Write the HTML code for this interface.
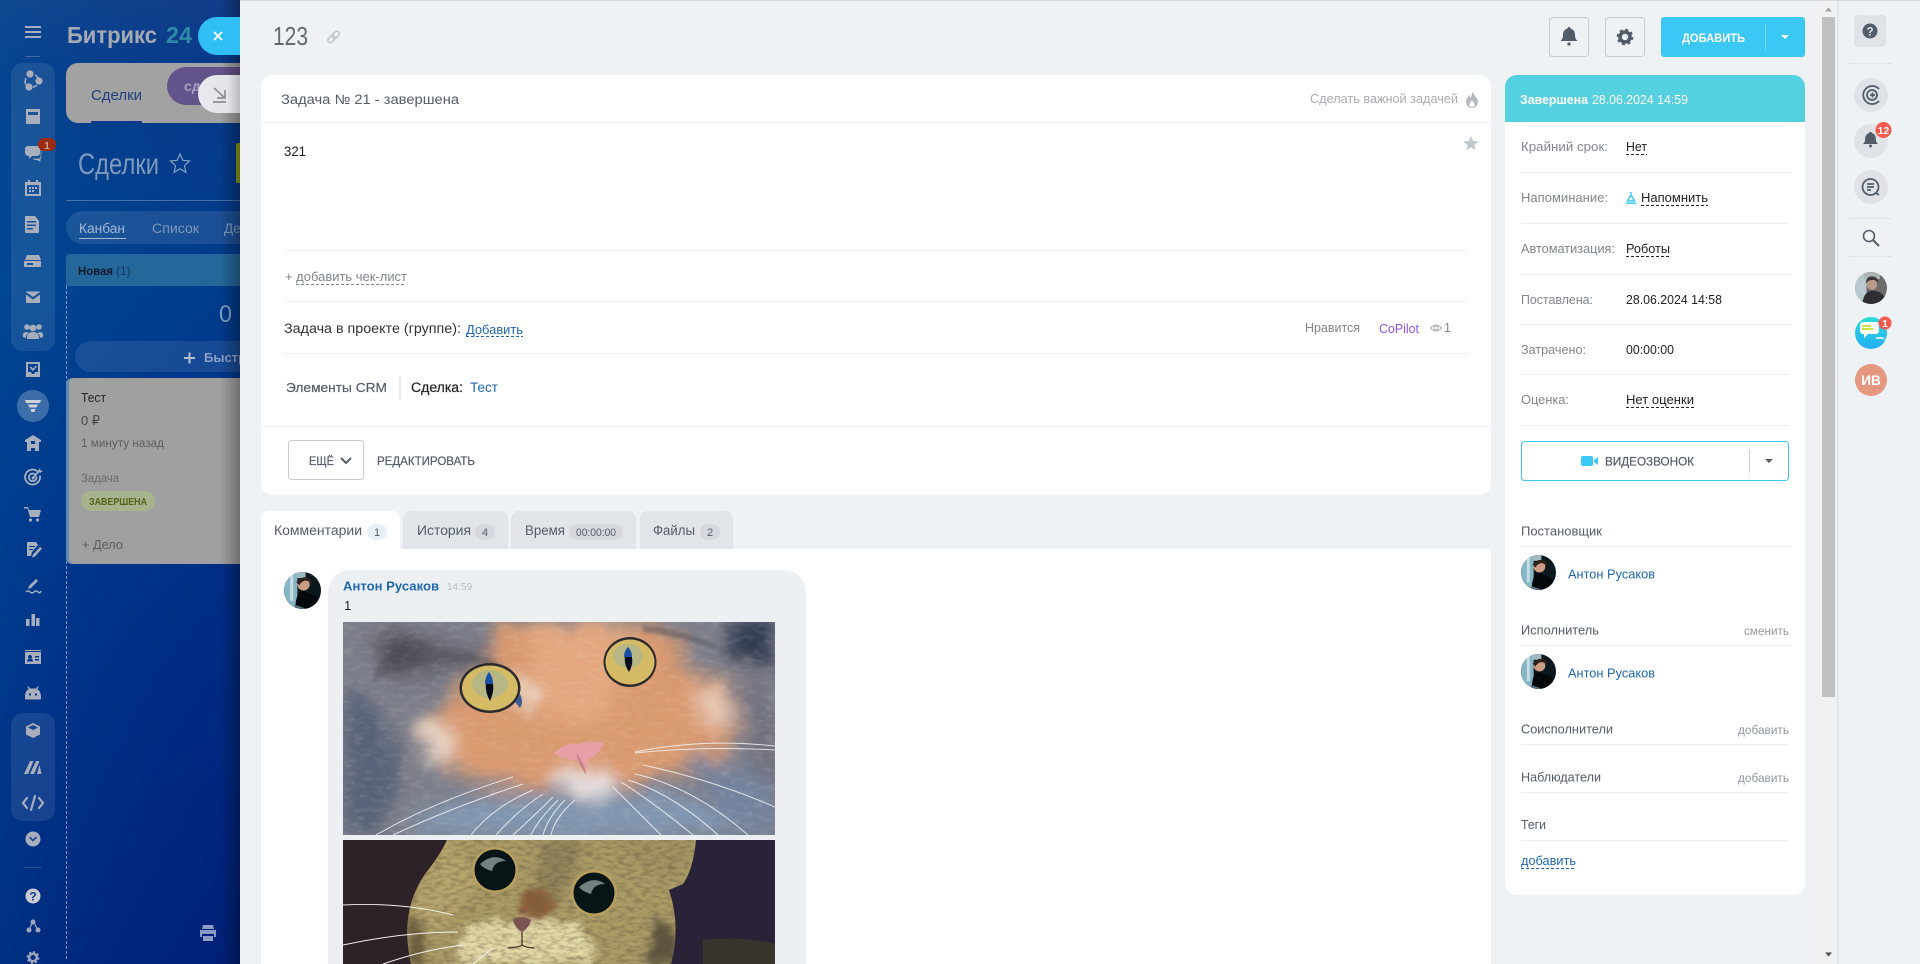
<!DOCTYPE html>
<html lang="ru"><head><meta charset="utf-8"><title>Задача 123</title>
<style>
html,body{margin:0;padding:0;width:1920px;height:964px;overflow:hidden;background:#eef2f4}
svg{display:block;position:absolute;left:0;top:0}
text{font-family:"Liberation Sans","DejaVu Sans",sans-serif;white-space:pre}
.d{stroke-dasharray:3 2;stroke-width:1;fill:none}
</style></head><body>
<svg width="1920" height="964" viewBox="0 0 1920 964" xmlns="http://www.w3.org/2000/svg">
<defs>
<linearGradient id="bg" x1="0" y1="0" x2="0" y2="1">
<stop offset="0" stop-color="#17448d"/><stop offset=".08" stop-color="#083f8b"/><stop offset=".3" stop-color="#00438f"/><stop offset=".55" stop-color="#00328a"/><stop offset=".8" stop-color="#00277e"/><stop offset="1" stop-color="#001e74"/>
</linearGradient>
<linearGradient id="bg2" x1="0" y1="0" x2="1" y2="0"><stop offset="0" stop-color="#005099" stop-opacity=".45"/><stop offset="1" stop-color="#00237e" stop-opacity=".3"/></linearGradient>
<linearGradient id="shade" x1="0" y1="0" x2="1" y2="0"><stop offset="0" stop-color="#000" stop-opacity="0"/><stop offset="1" stop-color="#000" stop-opacity=".3"/></linearGradient>
<linearGradient id="chatg" x1="0" y1="0" x2="0" y2="1"><stop offset="0" stop-color="#2fdcd5"/><stop offset="1" stop-color="#20aef5"/></linearGradient>
<linearGradient id="ming" x1="0" y1="0" x2="1" y2="0"><stop offset="0" stop-color="#e8eaee"/><stop offset=".7" stop-color="#e2e4e8"/><stop offset="1" stop-color="#b9bbbf"/></linearGradient>
<filter id="fur" x="-20%" y="-20%" width="140%" height="140%"><feGaussianBlur stdDeviation="9" result="s"/><feTurbulence type="fractalNoise" baseFrequency=".03" numOctaves="2" seed="4" result="n"/><feDisplacementMap in="s" in2="n" scale="20" xChannelSelector="R" yChannelSelector="G"/></filter>
<filter id="fur2" x="-20%" y="-20%" width="140%" height="140%"><feGaussianBlur stdDeviation="4" result="s"/><feTurbulence type="fractalNoise" baseFrequency=".05 .09" numOctaves="2" seed="9" result="n"/><feDisplacementMap in="s" in2="n" scale="12" xChannelSelector="R" yChannelSelector="G"/></filter>
<filter id="noise" x="0" y="0" width="100%" height="100%"><feTurbulence type="fractalNoise" baseFrequency=".12 .3" numOctaves="3" seed="7"/><feColorMatrix values="0 0 0 0 .12  0 0 0 0 .09  0 0 0 0 .05  2.600 0 0 0 -1.050"/></filter>
<filter id="noise1" x="0" y="0" width="100%" height="100%"><feTurbulence type="fractalNoise" baseFrequency=".09 .22" numOctaves="3" seed="3"/><feColorMatrix values="0 0 0 0 1  0 0 0 0 .93  0 0 0 0 .85  2.200 0 0 0 -1.050"/></filter>
<filter id="b2" x="-30%" y="-30%" width="160%" height="160%"><feGaussianBlur stdDeviation="1.500"/></filter>
<clipPath id="c1"><rect x="0" y="0" width="432" height="213"/></clipPath>
<clipPath id="c2"><rect x="0" y="0" width="432" height="124"/></clipPath>
<clipPath id="head2"><path d="M68 124Q56 72 82 34 98 14 104 0H353Q350 30 340 44L326 50Q338 85 328 124z"/></clipPath>
<clipPath id="avc"><circle cx="18" cy="18" r="18"/></clipPath>
<symbol id="av" viewBox="0 0 36 36"><g clip-path="url(#avc)"><rect width="36" height="36" fill="#0a171d"/><rect width="13" height="36" fill="#86b6c6"/><rect x="6" width="3" height="28" fill="#c9dde4"/><rect x="12" width="9" height="6" fill="#9fbac2"/><circle cx="19" cy="12" r="6" fill="#cd9c84"/><path d="M12 10q6-8 14-3l1 4q-6-4-8-2-3 1-4 4z" fill="#2e221b"/><path d="M11 36q0-15 7-18 7 3 12 5 4 3 4 13z" fill="#04080b"/><path d="M10 32q5 1 12 4h-11z" fill="#58717c"/></g></symbol>
</defs>

<!-- LEFT BACKDROP -->
<rect width="240" height="964" fill="url(#bg)"/>
<rect width="240" height="964" fill="url(#bg2)" opacity=".8"/>
<g fill="#a9aebc">
<rect x="25" y="26" width="16" height="2"/><rect x="25" y="31" width="16" height="2"/><rect x="25" y="36" width="16" height="2"/>
</g>
<rect x="25" y="56" width="15" height="1" fill="#fff" opacity=".2"/>
<rect x="11" y="63" width="44" height="288" rx="12" fill="#fff" opacity=".085"/>
<rect x="11" y="713" width="44" height="108" rx="12" fill="#fff" opacity=".085"/>
<circle cx="33" cy="406" r="16" fill="#fff" opacity=".24"/>
<g fill="#a9aebc">
<g transform="translate(33 81)"><circle cx="-3" cy="-7" r="3.600"/><circle cx="6" cy="0" r="3.600"/><circle cx="-4" cy="6" r="3.600"/><path d="M-7-3a8 8 0 0 0 0 7" fill="none" stroke="#a9aebc" stroke-width="1.500"/><path d="M2-6a7 7 0 0 1 3 3M4 4a7 7 0 0 1-4 2" fill="none" stroke="#a9aebc" stroke-width="1.500"/></g>
<path d="M26 109h14v15H26zM28 112v3h10v-3z" fill-rule="evenodd"/>
<path d="M28 146h9a3 3 0 0 1 3 3v4a3 3 0 0 1-3 3h-5l-3 3v-3a4 4 0 0 1-4-3v-4a3 3 0 0 1 3-3z"/><path d="M41 149v8a2 2 0 0 1-2 2h-6l5 1 2 1v-2a2 2 0 0 0 1-2z" stroke="#a9aebc" stroke-width=".7"/>
<path d="M25 182h3v-2h2v2h6v-2h2v2h3v14H25zM27 185v9h12v-9zM29 187h2v2h-2zM32 187h2v2h-2zM35 187h2v2h-2zM29 190h2v2h-2zM32 190h2v2h-2z" fill-rule="evenodd"/>
<path d="M25 216h10l4 5v11a1 1 0 0 1-1 1H26a1 1 0 0 1-1-1zM27 221v1.500h9V221zM27 224.500V226h9v-1.500zM27 228v1.500h6V228z" fill-rule="evenodd"/>
<path d="M27 255h12l2 5H25zM24 261h17v6H24zM27 263v2h6v-2z" fill-rule="evenodd"/>
<path d="M26 292l7 5 7-5v-.5H26zM26 294.500V303h14v-8.500l-7 5z"/>
<g transform="translate(33 332)"><circle cx="-6" cy="-5" r="2.800"/><circle cx="6" cy="-5" r="2.800"/><circle cy="-4" r="3.400"/><path d="M-10 5q-1-5 3-5l3 1q-3 1-3 5zM10 5q1-5-3-5l-3 1q3 1 3 5zM-6 6q0-6 6-6t6 6v1H-6z"/></g>
<path d="M26 362h14v15H26zM28 364v8h3l1 2h2l1-2h3v-8zM29.500 367.500l1.500-1 2 2 3-3 1 1-4 4.500z" fill-rule="evenodd"/>
<path d="M25 400h16l-1 3H26zM28 404.500h10l-1.500 3h-7zM30.500 409h5l-1 3h-3z" fill="#cfd2d9"/>
<path d="M33 435l8 5v2h-2v9h-4v-3h-4v3h-4v-9h-2v-2zM31 441v3h4v-3z" fill-rule="evenodd"/>
</g>
<g fill="none" stroke="#a9aebc" stroke-width="1.800" stroke-linecap="round">
<path d="M37 471a7.500 7.500 0 1 0 3 5"/><path d="M34.500 474a3.800 3.800 0 1 0 2 3"/><path d="M33 478l6-7"/>
<path d="M27 798l-4 5 4 5M39 798l4 5-4 5M31 810l4-14" stroke-width="2.200"/>
</g>
<g fill="#a9aebc">
<path d="M38 471l2-3 .5 2.500 2.500.5-3 2z"/><circle cx="33" cy="478" r="1.500"/>
<path d="M24 507h4l1 3h12l-2 7H30l-2.500-8.500H24z"/><circle cx="30.500" cy="520" r="1.600"/><circle cx="37.500" cy="520" r="1.600"/>
<path d="M27 542h9l2 3-6 7-1 4h-4zM29 546v1h6v-1zM29 549v1h4v-1z" fill-rule="evenodd"/><path d="M40 547l2 1.500-7 8-3 1 1-3z"/>
<path d="M36 579l2 2-7 7-3 1 1-3z"/>
<path d="M26 592q2-2 4 0t4 0 4 0 3-1" fill="none" stroke="#a9aebc" stroke-width="1.500"/>
<rect x="26" y="619" width="3.500" height="7"/><rect x="31.500" y="614" width="3.500" height="12"/><rect x="36" y="618" width="3.500" height="8"/>
<path d="M25 650h16v1H25zM25 652h16v12H25zM30 655a2 2 0 1 0 .01 0zM27 661.500h6q0-3-3-3t-3 3zM35 656v1.500h4V656zM35 659v1.500h4V659z" fill-rule="evenodd"/>
<path d="M28 686l2 2.500h6L38 686l.8.6-1.500 2.600Q41 691 41 697v1.500a1 1 0 0 1-1 1H26a1 1 0 0 1-1-1V697q0-6 3.700-7.800l-1.500-2.600zM29 693.500h2v2h-2zM35 693.500h2v2h-2z" fill-rule="evenodd"/>
<path d="M33 723l7 3.500v8L33 738l-7-3.500v-8zM28 727.500l5 2.500 5-2.500-5-2.500z" fill-rule="evenodd"/>
<path d="M24 774l6-13h3.500L28 774zM30 774l6-13h3.500L34 774zM37 774l2.500-9 2 9z"/>
<circle cx="33" cy="839" r="7.500"/>
</g>
<path d="M29.500 837l3.500 3.500 3.500-3.500" fill="none" stroke="#244a8f" stroke-width="1.800"/>
<rect x="23" y="867" width="19" height="1" fill="#fff" opacity=".15"/>
<circle cx="33" cy="896" r="7.500" fill="#c9ccd4"/><text x="33" y="900.500" text-anchor="middle" font-size="12" font-weight="bold" fill="#0f3a85">?</text>
<g fill="#9ea6bc"><circle cx="33" cy="922" r="2.500"/><circle cx="29" cy="930" r="2.500"/><circle cx="38" cy="930" r="2.500"/><path d="M32.500 922l-3.500 8M33.500 922l4.500 8" stroke="#9ea6bc" stroke-width="1.200"/>
<circle cx="33" cy="957.500" r="3.800" fill="none" stroke="#9ea6bc" stroke-width="2.500"/><circle cx="33" cy="957.500" r="5.500" fill="none" stroke="#9ea6bc" stroke-width="1.800" stroke-dasharray="2.200 2.100"/></g>
<rect x="38" y="138" width="18" height="13" rx="6.500" fill="#9c2c10"/><text x="47" y="149" text-anchor="middle" font-size="10" font-weight="bold" fill="#c9a89e">1</text>

<text x="67" y="43" font-size="23" font-weight="bold" fill="#a7aab3" textLength="90" lengthAdjust="spacingAndGlyphs">Битрикс</text>
<text x="166" y="43" font-size="23" font-weight="bold" fill="#2c8ba8" textLength="26" lengthAdjust="spacingAndGlyphs">24</text>

<path d="M240 63H78a12 12 0 0 0-12 12v36a12 12 0 0 0 12 12h162z" fill="#a2a2a2"/>
<text x="91" y="100" font-size="15" fill="#1f3f80" textLength="51" lengthAdjust="spacingAndGlyphs">Сделки</text>
<rect x="91" y="121" width="51" height="2" fill="#12368c"/>
<path d="M240 67h-54a19 19 0 0 0 0 38h54z" fill="#63538b"/>
<text x="184" y="91" font-size="14" fill="#a9a0c2" font-weight="bold">сд</text>

<text x="78" y="174" font-size="30" fill="#8aa2c1" textLength="81" lengthAdjust="spacingAndGlyphs" opacity=".92">Сделки</text>
<path d="M180 154l2.800 6.300 6.700.7-5 4.600 1.400 6.700-5.900-3.500-5.900 3.500 1.400-6.700-5-4.600 6.700-.7z" fill="none" stroke="#85a0c2" stroke-width="1.200"/>
<path d="M240 143h-2a2 2 0 0 0-2 2v36a2 2 0 0 0 2 2h2z" fill="#8a9b19"/>
<rect x="66" y="200" width="174" height="1" fill="#fff" opacity=".28"/>
<path d="M240 211H82.500a16.500 16.500 0 0 0 0 33H240z" fill="#fff" opacity=".1"/>
<text x="79" y="233" font-size="13.500" fill="#a5b9d0" textLength="46" lengthAdjust="spacingAndGlyphs">Канбан</text>
<rect x="79" y="238" width="47" height="1" fill="#a5b9d0"/>
<text x="152" y="233" font-size="13.500" fill="#7f9bbd" textLength="47" lengthAdjust="spacingAndGlyphs">Список</text>
<text x="224" y="233" font-size="13.500" fill="#7f9bbd">Де</text>

<path d="M240 254H70a4 4 0 0 0-4 4v28h174z" fill="#24679a"/>
<text x="78" y="275" font-size="12" font-weight="bold" fill="#0f1b2b" textLength="35" lengthAdjust="spacingAndGlyphs">Новая</text>
<text x="116" y="275" font-size="12" fill="#0f3a5c">(1)</text>
<path d="M66.500 286V960" stroke="#7d99bc" stroke-width="1" stroke-dasharray="3 2" fill="none"/>
<text x="219" y="322" font-size="24" fill="#7f9cc4" textLength="13" lengthAdjust="spacingAndGlyphs">0</text>
<path d="M240 341H90.500a15.500 15.500 0 0 0 0 31H240z" fill="#fff" opacity=".09"/>
<path d="M184 358h11M189.500 352.500v11" stroke="#b5bfd0" stroke-width="2"/>
<text x="204" y="362" font-size="13" font-weight="bold" fill="#8ba2c4">Быстрая</text>

<path d="M240 378H72a6 6 0 0 0-6 6v174a6 6 0 0 0 6 6h168z" fill="#5d8cb0"/>
<path d="M240 378H74a5 5 0 0 0-5 5v176a5 5 0 0 0 5 5h166z" fill="#a0a0a0"/>
<text x="81" y="402" font-size="12.500" fill="#262626" textLength="25" lengthAdjust="spacingAndGlyphs">Тест</text>
<text x="81" y="425" font-size="13" fill="#4a4a4a" textLength="19" lengthAdjust="spacingAndGlyphs">0 ₽</text>
<text x="81" y="447" font-size="11.500" fill="#5e5e5e" textLength="83" lengthAdjust="spacingAndGlyphs">1 минуту назад</text>
<text x="81" y="482" font-size="11.500" fill="#6a6a6a" textLength="38" lengthAdjust="spacingAndGlyphs">Задача</text>
<rect x="81" y="491" width="74" height="20" rx="10" fill="#a7b38d"/>
<text x="89" y="505" font-size="10" font-weight="bold" fill="#566418" textLength="58" lengthAdjust="spacingAndGlyphs">ЗАВЕРШЕНА</text>
<text x="82" y="549" font-size="12.500" fill="#5e5e5e" textLength="41" lengthAdjust="spacingAndGlyphs">+ Дело</text>
<path d="M203 925h10l1 4h-12zM200 930h16v7h-2v-3h-12v3h-2zM203 936h10v5h-10z" fill="#8b9cc4"/>
<rect x="220" y="0" width="20" height="964" fill="url(#shade)"/>

<!-- close + minimize tabs -->
<path d="M240 17h-23a19 19 0 0 0 0 38h23z" fill="#2fbff5"/>
<path d="M214 32l8 8M222 32l-8 8" stroke="#fff" stroke-width="1.800"/>
<path d="M240 75h-23a19 19 0 0 0 0 38h23z" fill="url(#ming)"/>
<path d="M214 88l11 10M225 90v8h-8M213 102h13" fill="none" stroke="#8e9095" stroke-width="1.700"/>

<!-- SLIDER PANEL -->
<rect x="240" y="0" width="1680" height="964" fill="#eef2f4"/>
<rect x="240" y="0" width="1680" height="1" fill="#d5d9de"/>
<text x="273" y="45" font-size="26" fill="#535c69" textLength="35" lengthAdjust="spacingAndGlyphs" opacity=".9">123</text>
<g transform="translate(333.500 37) rotate(-45)" fill="none" stroke="#c2c6cb" stroke-width="1.600"><rect x="-7" y="-2.500" width="8" height="5" rx="2.500"/><rect x="-1" y="-2.500" width="8" height="5" rx="2.500"/></g>

<!-- main card -->
<rect x="261" y="75" width="1230" height="420" rx="12" fill="#fff"/>
<rect x="261" y="122" width="1230" height="1" fill="#eceef0"/>
<text x="281" y="104" font-size="13.500" fill="#535c69" textLength="178" lengthAdjust="spacingAndGlyphs">Задача № 21 - завершена</text>
<text x="1310" y="103" font-size="13" fill="#a8adb3" textLength="148" lengthAdjust="spacingAndGlyphs">Сделать важной задачей</text>
<path d="M1472.500 91.500c1 4 5.500 6 5.500 10.500a6 6 0 0 1-12 0c0-3 2-5 3-7 .5 1.500 1 2.500 1.800 2.500 1-2 1.200-4 1.700-6z" fill="#b5b9be"/>
<path d="M1472 100.500c-1.500 1.800-2.700 3-2.700 4a2.700 2.700 0 0 0 5.400 0c0-1-1.200-2.200-2.700-4z" fill="#fff"/>
<path d="M1471 136l2.200 5 5.300.5-4 3.500 1.200 5.300-4.700-2.800-4.700 2.800 1.200-5.300-4-3.500 5.300-.5z" fill="#c3c8cd"/>
<text x="284" y="156" font-size="14" fill="#222" textLength="22" lengthAdjust="spacingAndGlyphs">321</text>
<g fill="#eceef0"><rect x="284" y="250" width="1184" height="1"/><rect x="284" y="301" width="1184" height="1"/><rect x="284" y="353" width="1184" height="1"/><rect x="261" y="426" width="1230" height="1"/></g>
<text x="285" y="281" font-size="12.500" fill="#80868e" textLength="122" lengthAdjust="spacingAndGlyphs">+ добавить чек-лист</text>
<path class="d" d="M296 284.500H406" stroke="#80868e"/>
<text x="284" y="333" font-size="13.500" fill="#333" textLength="177" lengthAdjust="spacingAndGlyphs">Задача в проекте (группе):</text>
<text x="466" y="334" font-size="13" fill="#2067b0" textLength="57" lengthAdjust="spacingAndGlyphs">Добавить</text>
<path class="d" d="M466 336.500H523" stroke="#2067b0"/>
<text x="1305" y="332" font-size="12.500" fill="#80868e" textLength="55" lengthAdjust="spacingAndGlyphs">Нравится</text>
<text x="1379" y="333" font-size="12.500" fill="#8e52ec" textLength="40" lengthAdjust="spacingAndGlyphs">CoPilot</text>
<path d="M1430.500 328q5.500-6 11 0-5.500 6-11 0z" fill="none" stroke="#a8adb3" stroke-width="1"/><circle cx="1436" cy="328" r="2" fill="none" stroke="#a8adb3"/>
<text x="1444" y="332" font-size="12.500" fill="#80868e">1</text>
<text x="286" y="392" font-size="13" fill="#535c69" textLength="101" lengthAdjust="spacingAndGlyphs" stroke="#535c69" stroke-width=".2">Элементы CRM</text>
<rect x="399.500" y="376" width="1" height="24" fill="#ccd0d4"/>
<text x="411" y="392" font-size="13.500" fill="#222" textLength="52" lengthAdjust="spacingAndGlyphs" stroke="#222" stroke-width=".2">Сделка:</text>
<text x="470" y="392" font-size="13.500" fill="#2067b0" textLength="28" lengthAdjust="spacingAndGlyphs">Тест</text>
<rect x="288.500" y="440.500" width="75" height="39" rx="3" fill="#fff" stroke="#c6cdd3"/>
<text x="309" y="465" font-size="12" fill="#535c69" textLength="25" lengthAdjust="spacingAndGlyphs" stroke="#535c69" stroke-width=".2">ЕЩЁ</text>
<path d="M341 458l5 5 5-5" fill="none" stroke="#535c69" stroke-width="2"/>
<text x="377" y="465" font-size="12" fill="#535c69" textLength="98" lengthAdjust="spacingAndGlyphs" stroke="#535c69" stroke-width=".2">РЕДАКТИРОВАТЬ</text>

<!-- comment card -->
<path d="M261 549h1230v415H261z" fill="#fff"/>
<path d="M261 549v-30a8 8 0 0 1 8-8h123a8 8 0 0 1 8 8v30z" fill="#fff"/>
<path d="M403 549v-30a8 8 0 0 1 8-8h89a8 8 0 0 1 8 8v30zM511 549v-30a8 8 0 0 1 8-8h109a8 8 0 0 1 8 8v30zM640 549v-30a8 8 0 0 1 8-8h77a8 8 0 0 1 8 8v30z" fill="#e1e5e9"/>
<text x="274" y="535" font-size="13.500" fill="#535c69" textLength="88" lengthAdjust="spacingAndGlyphs">Комментарии</text>
<rect x="367" y="524" width="20" height="16" rx="8" fill="#e9eff6"/><text x="377" y="536" text-anchor="middle" font-size="11" fill="#535c69">1</text>
<text x="417" y="535" font-size="13.500" fill="#535c69" textLength="54" lengthAdjust="spacingAndGlyphs">История</text>
<rect x="475" y="524" width="20" height="16" rx="8" fill="#d5d9dd"/><text x="485" y="536" text-anchor="middle" font-size="11" fill="#535c69">4</text>
<text x="525" y="535" font-size="13.500" fill="#535c69" textLength="40" lengthAdjust="spacingAndGlyphs">Время</text>
<rect x="569" y="524" width="54" height="16" rx="8" fill="#d5d9dd"/><text x="576" y="536" font-size="11" fill="#535c69" textLength="40" lengthAdjust="spacingAndGlyphs">00:00:00</text>
<text x="653" y="535" font-size="13.500" fill="#535c69" textLength="42" lengthAdjust="spacingAndGlyphs">Файлы</text>
<rect x="700" y="524" width="20" height="16" rx="8" fill="#d5d9dd"/><text x="710" y="536" text-anchor="middle" font-size="11" fill="#535c69">2</text>

<use href="#av" x="284" y="572" width="37" height="37"/>
<path d="M328 964V592a22 22 0 0 1 22-22h434a22 22 0 0 1 22 22v372z" fill="#edf0f3"/>
<text x="343" y="590.500" font-size="13" font-weight="bold" fill="#2067b0" textLength="96" lengthAdjust="spacingAndGlyphs">Антон Русаков</text>
<text x="447" y="590" font-size="10.500" fill="#b9bec3" textLength="25" lengthAdjust="spacingAndGlyphs">14:59</text>
<text x="344" y="610" font-size="13" fill="#222">1</text>

<!-- cat 1 -->
<svg x="343" y="622" width="432" height="213" viewBox="0 0 432 213"><g clip-path="url(#c1)">
<rect width="432" height="213" fill="#7c7e8a"/>
<g filter="url(#fur)">
<path d="M0 70Q40 80 55 130 60 170 35 213H0z" fill="#596278"/>
<path d="M25 10Q90 5 160 35 120 55 60 60 30 50 25 10z" fill="#66666f"/>
<path d="M40 20Q60 15 85 30 70 45 45 45z" fill="#45454d"/>
<rect x="385" y="0" width="47" height="40" fill="#2e3950"/>
<path d="M395 30Q432 60 432 140V213H395Q420 130 395 30z" fill="#6f6f7c"/>
<path d="M150 0H310Q345 15 340 50 400 50 395 105 385 145 315 155 250 178 180 165 100 160 70 115 100 80 150 40z" fill="#d99a70"/>
<path d="M175 0H285Q285 40 260 100H205Q195 40 175 0z" fill="#e4a77f"/>
<path d="M72 100Q98 95 110 115 114 135 100 145 78 135 72 100z" fill="#e9d4c4"/>
<path d="M352 65Q388 65 392 92 384 108 358 100z" fill="#e8cbb8"/>
<path d="M172 55L195 60 192 90 175 82z" fill="#efdac8"/>
<path d="M60 213Q90 170 190 172L230 182 300 172Q370 168 410 213z" fill="#8196b1"/>
<path d="M212 152Q240 145 280 156 276 178 240 178 220 175 212 152z" fill="#e8e2e2"/>
<path d="M345 135Q400 135 432 170V213H385Q375 170 345 135z" fill="#73839e"/>
</g>
<rect width="432" height="213" filter="url(#noise1)" opacity=".14"/>
<path d="M30 60Q100 25 170 50 130 22 60 25 30 35 30 60z" fill="#4e4d55" opacity=".4" filter="url(#b2)"/>
<path d="M300 10Q340 15 385 30 345 8 300 3z" fill="#4e4d55" opacity=".45" filter="url(#b2)"/>
<!-- eyes -->
<ellipse cx="147" cy="66" rx="30.500" ry="25" fill="#2a2a2e"/>
<ellipse cx="147" cy="66" rx="28" ry="22.500" fill="#d6bb66"/>
<ellipse cx="147" cy="62" rx="18" ry="14" fill="#acb490" opacity=".75"/>
<path d="M146 50q8 14 1 29-8-14-1-29z" fill="#050b1c"/><path d="M146 50q4 5 4 12h-8q0-7 4-12z" fill="#1a4fa6"/>
<path d="M177 72q4 8 0 14l-5-6z" fill="#3f5b90"/>
<ellipse cx="287" cy="40" rx="26.500" ry="25" fill="#2a2a2e"/>
<ellipse cx="287" cy="40" rx="24.500" ry="22.500" fill="#d6bb66"/>
<ellipse cx="285" cy="34" rx="15" ry="12" fill="#acb490" opacity=".75"/>
<path d="M285 25q8 13 1 25-8-12-1-25z" fill="#050b1c"/><path d="M285 25q4 4 4 10h-8q0-6 4-10z" fill="#1a4fa6"/>
<!-- nose -->
<path d="M211 131q10-10 24-9 14-4 26-1-4 11-15 16-2 5-3 16-4-12-10-15-12-1-22-7z" fill="#e6a0a6"/>
<path d="M233 130q4 6 8 14l2 9-3-5q-5-8-7-18z" fill="#c57f8d"/>
<!-- whiskers -->
<g fill="none" stroke="#f3f5f9" stroke-width="1" opacity=".85">
<path d="M170 155Q90 180 33 213"/><path d="M180 162Q110 185 50 213"/><path d="M190 168Q150 185 128 213"/><path d="M200 172Q175 188 153 213"/><path d="M210 175Q190 195 170 213"/><path d="M215 178Q195 198 188 213"/><path d="M222 178Q205 195 200 213"/><path d="M232 178Q212 195 208 213"/>
<path d="M292 130Q360 116 432 124"/><path d="M292 131Q360 124 432 128"/><path d="M300 143Q370 158 432 185"/><path d="M292 152Q350 165 405 213"/><path d="M285 158Q330 172 375 213"/><path d="M278 160Q310 180 350 213"/><path d="M270 165Q290 185 318 213"/>
</g>
</g></svg>

<!-- cat 2 -->
<svg x="343" y="840" width="432" height="124" viewBox="0 0 432 124"><g clip-path="url(#c2)">
<rect width="220" height="124" fill="#2c2228"/>
<rect x="220" width="212" height="124" fill="#2a2337"/>
<path d="M360 124V100Q400 96 432 104V124z" fill="#38342c"/>
<g clip-path="url(#head2)">
<rect width="432" height="124" fill="#ab9c66"/>
<g filter="url(#fur2)">
<path d="M100 0Q130 10 130 50L95 90 70 70z" fill="#b7a66d"/>
<path d="M195 0H240Q235 30 215 60H185Q200 30 195 0z" fill="#93855a"/>
<path d="M180 50Q205 45 215 62 205 82 185 85 170 70 180 50z" fill="#8c5f3a"/>
<path d="M125 85Q170 75 235 85 260 105 245 124H115Q110 100 125 85z" fill="#e3d9a6"/>
<path d="M308 80Q340 80 335 124H300Q312 100 308 80z" fill="#5d5440"/>
<path d="M68 70Q85 85 82 124H62z" fill="#6e6040"/>
<path d="M270 0H352Q345 30 328 45 290 30 270 0z" fill="#a39564"/>
</g>
<rect width="432" height="124" filter="url(#noise)" opacity=".42"/>
</g>
<path d="M170 80q8-6 18 0-2 8-9 12-7-4-9-12z" fill="#7a5250"/>
<path d="M179 92v12M165 108q14-1 14-4 0 3 12 4" fill="none" stroke="#3d2c22" stroke-width="1.200"/>
<circle cx="152" cy="30" r="23" fill="#b99f5e"/><circle cx="152" cy="30" r="20.500" fill="#081517"/>
<path d="M137 24q14-12 26-3-12 0-14 10-8-2-12-7z" fill="#94a7a6" opacity=".75"/>
<circle cx="251" cy="53" r="23" fill="#b99f5e"/><circle cx="251" cy="53" r="20.500" fill="#081517"/>
<path d="M236 47q14-12 26-3-12 0-14 10-8-2-12-7z" fill="#94a7a6" opacity=".75"/>
<g fill="none" stroke="#f3f2ec" stroke-width="1">
<path d="M0 65Q60 62 110 75"/><path d="M0 105Q60 92 115 92"/><path d="M40 124Q80 110 120 105"/><path d="M130 124Q145 112 150 108"/>
</g>
</g></svg>

<!-- scroll bar -->
<rect x="1820" y="1" width="17" height="963" fill="#f1f1f1"/>
<rect x="1822" y="17" width="13" height="680" fill="#c0c0c0"/>
<path d="M1825 11.500l3.500-4 3.500 4z" fill="#a3a3a3"/><path d="M1825 952.500h7l-3.500 4z" fill="#505050"/>
<rect x="1837" y="1" width="1.500" height="963" fill="#dfe3e7"/>

<!-- top buttons -->
<rect x="1549.500" y="17.500" width="39" height="39" rx="3" fill="#eef2f4" stroke="#c6cdd3"/>
<g transform="translate(1569 37.500)" fill="#535c69"><path d="M-1.500-9a1.500 1.500 0 0 1 3 0c3.300 1 4.500 3.500 4.500 6.500 0 3 1 4.500 2.500 6h-17C-7 2-6 .5-6-2.500-6-5.500-4.800-8-1.500-9z"/><circle cy="6.500" r="1.600"/></g>
<rect x="1605.500" y="17.500" width="39" height="39" rx="3" fill="#eef2f4" stroke="#c6cdd3"/>
<g transform="translate(1625 37)" fill="none" stroke="#535c69"><circle r="5" stroke-width="3.600"/><circle r="7" stroke-width="2.600" stroke-dasharray="2.800 2.700"/></g>
<rect x="1661" y="17" width="144" height="40" rx="3" fill="#3bc8f5"/>
<text x="1682" y="42" font-size="12" font-weight="bold" fill="#fff" textLength="63" lengthAdjust="spacingAndGlyphs">ДОБАВИТЬ</text>
<rect x="1765" y="25" width="1" height="25" fill="#fff" opacity=".35"/>
<path d="M1781 35h8l-4 4z" fill="#fff"/>

<!-- right card -->
<rect x="1505" y="75" width="300" height="820" rx="12" fill="#fff"/>
<path d="M1505 122V87a12 12 0 0 1 12-12h276a12 12 0 0 1 12 12v35z" fill="#55d0e0"/>
<text x="1520" y="104" font-size="12.500" fill="#fff" font-weight="bold" textLength="68" lengthAdjust="spacingAndGlyphs">Завершена</text>
<text x="1592" y="104" font-size="12.500" fill="#fff" textLength="96" lengthAdjust="spacingAndGlyphs">28.06.2024 14:59</text>
<g fill="#eceef0"><rect x="1521" y="172" width="268" height="1"/><rect x="1521" y="223" width="268" height="1"/><rect x="1521" y="274" width="268" height="1"/><rect x="1521" y="324" width="268" height="1"/><rect x="1521" y="374" width="268" height="1"/><rect x="1521" y="425" width="268" height="1"/></g>
<g font-size="12.500" fill="#80868e">
<text x="1521" y="151" textLength="87" lengthAdjust="spacingAndGlyphs">Крайний срок:</text>
<text x="1521" y="202" textLength="87" lengthAdjust="spacingAndGlyphs">Напоминание:</text>
<text x="1521" y="253" textLength="94" lengthAdjust="spacingAndGlyphs">Автоматизация:</text>
<text x="1521" y="304" textLength="72" lengthAdjust="spacingAndGlyphs">Поставлена:</text>
<text x="1521" y="354" textLength="65" lengthAdjust="spacingAndGlyphs">Затрачено:</text>
<text x="1521" y="404" textLength="48" lengthAdjust="spacingAndGlyphs">Оценка:</text>
</g>
<g font-size="12.500" fill="#222">
<text x="1626" y="151" textLength="21" lengthAdjust="spacingAndGlyphs">Нет</text>
<text x="1641" y="202" textLength="67" lengthAdjust="spacingAndGlyphs">Напомнить</text>
<text x="1626" y="253" textLength="44" lengthAdjust="spacingAndGlyphs">Роботы</text>
<text x="1626" y="304" textLength="96" lengthAdjust="spacingAndGlyphs">28.06.2024 14:58</text>
<text x="1626" y="354" textLength="48" lengthAdjust="spacingAndGlyphs">00:00:00</text>
<text x="1626" y="404" textLength="68" lengthAdjust="spacingAndGlyphs">Нет оценки</text>
</g>
<g stroke="#222"><path class="d" d="M1626 154.500h21"/><path class="d" d="M1641 205.500h67"/><path class="d" d="M1626 256.500h45"/><path class="d" d="M1626 407.500h69"/></g>
<path d="M1631 195l3.500 6h-7zM1626 203.200h10M1631 192v2" fill="none" stroke="#3bc8f5" stroke-width="1.500"/>

<rect x="1521.500" y="441.500" width="267" height="39" rx="3" fill="#fff" stroke="#3bc8f5"/>
<rect x="1581" y="456" width="12" height="10" rx="2" fill="#3bc8f5"/><path d="M1594 460l4-3v8l-4-3z" fill="#3bc8f5"/>
<text x="1605" y="465.500" font-size="12" fill="#535c69" textLength="89" lengthAdjust="spacingAndGlyphs" stroke="#535c69" stroke-width=".2">ВИДЕОЗВОНОК</text>
<rect x="1749" y="449" width="1" height="24" fill="#ccd0d4"/>
<path d="M1765 459h8l-4 4z" fill="#535c69"/>

<g font-size="13" fill="#535c69">
<text x="1521" y="535.500" textLength="81" lengthAdjust="spacingAndGlyphs">Постановщик</text>
<text x="1521" y="634.500" textLength="78" lengthAdjust="spacingAndGlyphs">Исполнитель</text>
<text x="1521" y="733.500" textLength="92" lengthAdjust="spacingAndGlyphs">Соисполнители</text>
<text x="1521" y="781.500" textLength="80" lengthAdjust="spacingAndGlyphs">Наблюдатели</text>
<text x="1521" y="829" textLength="25" lengthAdjust="spacingAndGlyphs">Теги</text>
</g>
<g fill="#eceef0"><rect x="1521" y="546" width="268" height="1"/><rect x="1521" y="645" width="268" height="1"/><rect x="1521" y="744" width="268" height="1"/><rect x="1521" y="792" width="268" height="1"/><rect x="1521" y="840" width="268" height="1"/></g>
<g font-size="11.500" fill="#9198a0">
<text x="1744" y="635" textLength="45" lengthAdjust="spacingAndGlyphs">сменить</text>
<text x="1738" y="734" textLength="51" lengthAdjust="spacingAndGlyphs">добавить</text>
<text x="1738" y="782" textLength="51" lengthAdjust="spacingAndGlyphs">добавить</text>
</g>
<use href="#av" x="1521" y="555" width="35" height="35"/>
<use href="#av" x="1521" y="654" width="35" height="35"/>
<text x="1568" y="578.500" font-size="12.500" fill="#2067b0" textLength="87" lengthAdjust="spacingAndGlyphs">Антон Русаков</text>
<text x="1568" y="677.500" font-size="12.500" fill="#2067b0" textLength="87" lengthAdjust="spacingAndGlyphs">Антон Русаков</text>
<text x="1521" y="865" font-size="13" fill="#2067b0" textLength="55" lengthAdjust="spacingAndGlyphs">добавить</text>
<path class="d" d="M1521 868.500h55" stroke="#2067b0"/>

<!-- right sidebar -->
<rect x="1854" y="15" width="32" height="32" rx="4" fill="#dfe3e7"/>
<circle cx="1870" cy="31" r="7.500" fill="#535c69"/><text x="1870" y="35.500" text-anchor="middle" font-size="11.500" font-weight="bold" fill="#dfe3e7">?</text>
<rect x="1849" y="63" width="43" height="1" fill="#dfe3e7"/>
<circle cx="1871" cy="95" r="17" fill="#dfe3e7"/><circle cx="1871" cy="141" r="17" fill="#dfe3e7"/><circle cx="1871" cy="187" r="17" fill="#dfe3e7"/>
<g fill="none" stroke="#535c69" stroke-width="1.800">
<path d="M1879 101a9 9 0 1 1 0-12"/><circle cx="1872" cy="95" r="5"/><path d="M1870 95h5M1872.500 92.500v5"/>
<circle cx="1870.500" cy="187" r="8"/><path d="M1867 184h7M1867 187h7M1867 190h4M1876 193l3 2"/>
</g>
<g transform="translate(1870.500 141)" fill="#535c69"><path d="M-1.300-8a1.300 1.300 0 0 1 2.600 0c3 1 4 3 4 5.500 0 3 1 4.500 2.200 5.500H-7.500C-6.300 2-5.300 .5-5.300-2.500-5.300-5-4.300-7-1.300-8z"/><circle cy="5" r="1.500"/></g>
<circle cx="1883.500" cy="130" r="8" fill="#f5594c"/><text x="1883.500" y="134" text-anchor="middle" font-size="10.500" font-weight="bold" fill="#fff">12</text>
<rect x="1849" y="218" width="43" height="1" fill="#dfe3e7"/>
<circle cx="1869" cy="236" r="5.500" fill="none" stroke="#535c69" stroke-width="1.600"/><path d="M1873 240l6 6" stroke="#535c69" stroke-width="2"/>
<rect x="1849" y="256" width="43" height="1" fill="#dfe3e7"/>
<svg x="1855" y="272" width="32" height="32" viewBox="0 0 36 36"><g clip-path="url(#avc)"><rect width="36" height="36" fill="#6d6a6a"/><rect width="13" height="36" fill="#b7c9cf"/><rect x="10" width="18" height="8" fill="#aeb5b6"/><circle cx="19" cy="14" r="6" fill="#b89a88"/><path d="M12 13q1-9 8-8 7 1 6 8-3-5-7-4-4 0-7 4z" fill="#3c3636"/><path d="M8 36q2-14 11-15 10 0 15 8v7z" fill="#2f2f33"/></g></svg>
<circle cx="1871" cy="333" r="16" fill="url(#chatg)"/>
<path d="M1863 322h13a3 3 0 0 1 3 3v6a3 3 0 0 1-3 3h-8l-4 4v-4h-1a3 3 0 0 1-3-3v-6a3 3 0 0 1 3-3z" fill="#fff"/>
<path d="M1862 326h9M1862 329h11" stroke="#b5d900" stroke-width="1.600"/>
<path d="M1876 337h7l2 3-3-1h-6z" fill="#c9f0ff"/>
<circle cx="1885" cy="323" r="6.500" fill="#f5594c"/><text x="1885" y="327" text-anchor="middle" font-size="10.500" font-weight="bold" fill="#fff">1</text>
<circle cx="1871" cy="380" r="16" fill="#e6977f"/><text x="1871" y="385" text-anchor="middle" font-size="13.500" font-weight="bold" fill="#fff">ИВ</text>
</svg>
</body></html>
